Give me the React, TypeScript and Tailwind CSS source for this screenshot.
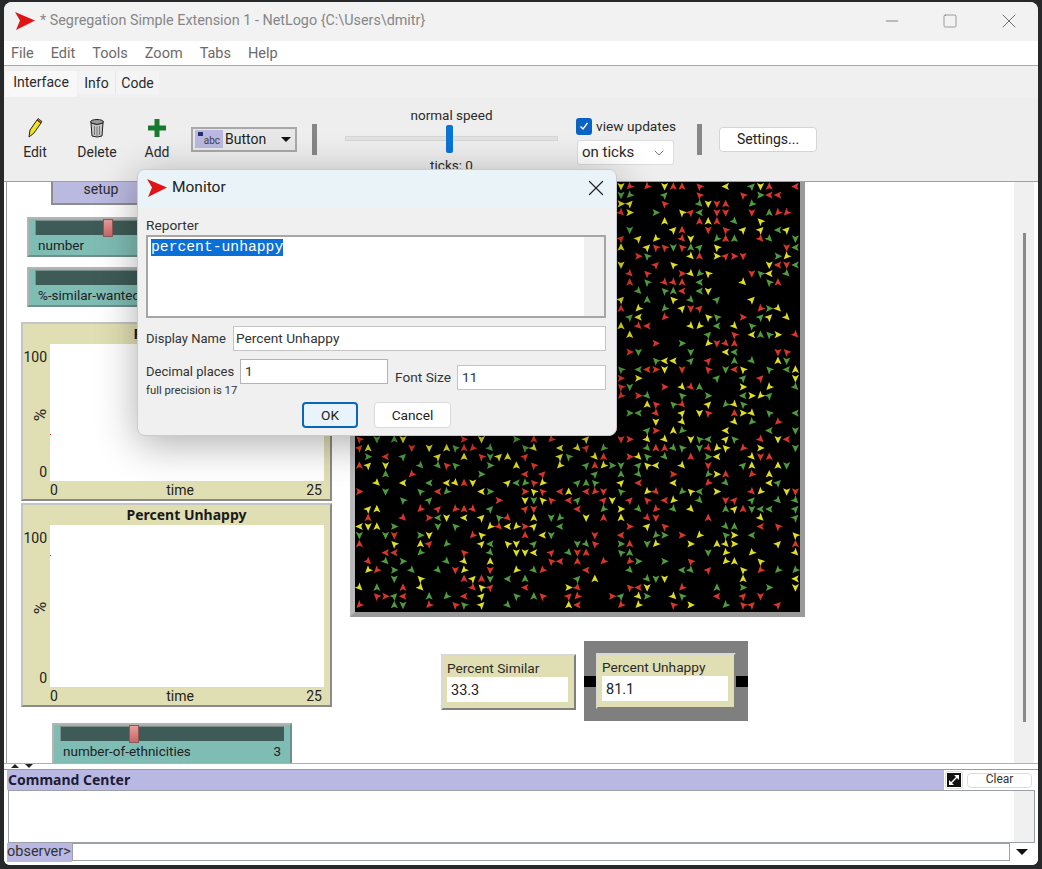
import { ChevronDown, Minus, Square, X } from 'lucide-react'

// seeded so the turtles stay put between runs
function makeTurtles() {
	let s = 20240611
	const rnd = () => {
		s = (s + 0x6d2b79f5) | 0
		let t = Math.imul(s ^ (s >>> 15), 1 | s)
		t = (t + Math.imul(t ^ (t >>> 7), 61 | t)) ^ t
		return ((t ^ (t >>> 14)) >>> 0) / 4294967296
	}
	const colors = ['#d9362b', '#dede22', '#4f9c3f']
	const out: { x: number; y: number; r: number; c: string }[] = []
	for (let row = 0; row < 49; row++) {
		for (let col = 0; col < 51; col++) {
			if (rnd() < 0.42) {
				out.push({
					x: col * 8.72 + 4.4,
					y: row * 8.72 + 4.4,
					r: Math.floor(rnd() * 8) * 45,
					c: colors[Math.floor(rnd() * 3)],
				})
			}
		}
	}
	return out
}

const turtles = makeTurtles()

function Logo({ className }: { className: string }) {
	return (
		<svg className={className} viewBox="0 0 20 18">
			<polygon points="0,0 20,8.5 1,18 5,8.5" fill="#e01414" />
		</svg>
	)
}

function ToolButton({ icon, label, className }: { icon: React.ReactNode; label: string; className: string }) {
	return (
		<div className={`flex flex-col items-center ${className}`}>
			<div className="h-[24px] flex items-center justify-center">{icon}</div>
			<span className="text-[14px] leading-[20px] mt-[2px] text-[#2a2a2a]">{label}</span>
		</div>
	)
}

function Slider({ className, label, thumb, value }: { className: string; label: string; thumb: string; value?: string }) {
	return (
		<div className={`absolute bg-[#7fbcb4] border-2 border-t-[#b4b4b4] border-l-[#b4b4b4] border-r-[#6f8f8b] border-b-[#6f8f8b] ${className}`}>
			<div className="relative mx-[6px] mt-[1px] h-[15px] bg-[#3f5b57] border-t border-l border-[#7b8f8c]">
				<div className={`absolute top-[-2px] w-[10px] h-[18px] bg-linear-to-b from-[#e89c9c] to-[#c96666] border border-[#8a5a5a] ${thumb}`} />
			</div>
			<div className="flex justify-between px-[9px] text-[13.5px] leading-[20px] text-[#222]">
				<span className="whitespace-nowrap">{label}</span>
				<span>{value}</span>
			</div>
		</div>
	)
}

function Plot({ className, title, dot }: { className: string; title: string; dot: string }) {
	return (
		<div className={`absolute flex flex-col bg-[#e0dfb3] border-2 border-t-[#c4c4c4] border-l-[#c4c4c4] border-r-[#8a8a8a] border-b-[#8a8a8a] pl-[2px] pr-[6px] ${className}`}>
			<div className="h-[20px] leading-[20px] text-center text-[14px] font-bold font-['Noto_Sans',sans-serif] text-[#1a1a1a] pl-[24px]">{title}</div>
			<div className="flex-1 flex min-h-0">
				<div className="w-[25px] flex flex-col justify-between items-end pr-[3px] pt-[4px] text-[14px] leading-[18px] text-[#222]">
					<span>100</span>
					<span className="-rotate-90 mr-[1px] text-[17px]">%</span>
					<span>0</span>
				</div>
				<div className="relative flex-1 bg-white">
					<div className={`absolute left-0 w-[1px] h-[1px] ${dot}`} />
				</div>
			</div>
			<div className="h-[18px] flex justify-between pl-[25px] pr-[2px] text-[14px] leading-[18px] text-[#222]">
				<span>0</span>
				<span className="ml-[-4px]">time</span>
				<span>25</span>
			</div>
		</div>
	)
}

function Monitor({ className, label, value }: { className: string; label: string; value: string }) {
	return (
		<div className={`bg-[#e0dfb3] border-2 border-t-[#d8d8d8] border-l-[#d8d8d8] border-r-[#7f7f7f] border-b-[#7f7f7f] pl-[4px] pr-[6px] ${className}`}>
			<div className="h-[21px] leading-[24px] text-[13.7px] text-[#2a2a2a] whitespace-nowrap">{label}</div>
			<div className="h-[25px] bg-white px-[4px] leading-[27px] text-[14.5px] text-[#222]">{value}</div>
		</div>
	)
}

export default function App() {
	return (
		<div className="relative w-[1042px] h-[869px] overflow-hidden bg-[#26282a] pt-[2px] pl-[4px] pr-[4px] pb-[4px] font-['Roboto',sans-serif]">
			<div className="h-full flex flex-col rounded-t-[8px] rounded-b-[6px] overflow-hidden bg-[#f0f0f0]">
				{/* title bar */}
				<div className="h-[39px] shrink-0 flex items-center bg-[#f2f2f2] text-[#868686] pb-[2px]">
					<Logo className="w-[20px] h-[18px] ml-[11px]" />
					<span className="ml-[5px] text-[14.35px]">* Segregation Simple Extension 1 - NetLogo {'{C:\\Users\\dmitr}'}</span>
					<div className="ml-auto flex items-center text-[#6f6f6f]">
						<Minus className="w-[20px] h-[20px] mr-[40px]" strokeWidth={1} />
						<Square className="w-[16px] h-[16px] mr-[39px]" strokeWidth={1} />
						<X className="w-[24px] h-[24px] mr-[17px]" strokeWidth={1} />
					</div>
				</div>
				{/* menu */}
				<div className="h-[25px] shrink-0 flex items-center gap-[17px] bg-white border-b border-[#a8a8a8] pl-[7px] pt-[1px] text-[14.5px] text-[#6a6a6a]">
					<span>File</span>
					<span>Edit</span>
					<span>Tools</span>
					<span>Zoom</span>
					<span>Tabs</span>
					<span>Help</span>
				</div>
				{/* tabs */}
				<div className="h-[31px] shrink-0 flex items-end pl-[1px] text-[14px] text-[#2a2a2a] bg-[#f0f0f0]">
					<div className="h-[26px] w-[72px] text-center leading-[22px] bg-[#f8f8f8]">Interface</div>
					<div className="h-[23px] w-[38px] ml-[1px] text-center leading-[24px] mb-[3px] bg-[#f4f4f4] border-r border-[#e6e6e6]">Info</div>
					<div className="h-[23px] w-[43px] text-center leading-[24px] mb-[3px] bg-[#f4f4f4]">Code</div>
				</div>
				{/* toolbar */}
				<div className="h-[85px] shrink-0 flex items-center bg-[#eeeeee] border-b border-[#a0a0a0] pl-[7px]">
					<ToolButton
						className="w-[48px]"
						label="Edit"
						icon={
							<svg className="w-[16px] h-[20px]" viewBox="0 0 16 20">
								<polygon points="2,19 3,12 10,2 14,5 7,15" fill="#f2e41c" stroke="#222" strokeWidth="1" />
								<polygon points="10,2 11,0.5 15,3.5 14,5" fill="#e8641e" stroke="#222" strokeWidth="0.8" />
							</svg>
						}
					/>
					<ToolButton
						className="w-[60px] ml-[8px]"
						label="Delete"
						icon={
							<svg className="w-[16px] h-[20px]" viewBox="0 0 16 20">
								<ellipse cx="8" cy="4" rx="6.5" ry="2.5" fill="#9a9a9a" stroke="#222" strokeWidth="1" />
								<path d="M2 5 L3 18 Q8 20 13 18 L14 5 Q8 8 2 5Z" fill="#c4c4c4" stroke="#222" strokeWidth="1" />
								<path d="M5.5 8 V17 M8 8.5 V18 M10.5 8 V17" stroke="#777" strokeWidth="1" />
							</svg>
						}
					/>
					<ToolButton
						className="w-[44px] ml-[8px]"
						label="Add"
						icon={
							<svg className="w-[18px] h-[18px]" viewBox="0 0 18 18">
								<path d="M6.5 0 H11.5 V6.5 H18 V11.5 H11.5 V18 H6.5 V11.5 H0 V6.5 H6.5Z" fill="#187a2f" />
							</svg>
						}
					/>
					<div className="w-[106px] h-[25px] ml-[12px] flex items-center border-2 border-[#a8a8a8] bg-[#e8e8e8] pl-[2px] text-[14px] text-[#222]">
						<div className="relative w-[28px] h-[18px] bg-[#b9b8e2] text-[10px] leading-[22px] text-right pr-[3px] text-[#444]">
							abc
							<span className="absolute left-[3px] top-[2px] w-[5px] h-[4px] bg-[#223066]" />
						</div>
						<span className="ml-[2px]">Button</span>
						<span className="ml-auto mr-[4px] w-0 h-0 border-x-[5px] border-x-transparent border-t-[5px] border-t-[#111]" />
					</div>
					<div className="w-[5px] h-[31px] ml-[15px] bg-[#868686]" />
					<div className="relative w-[213px] h-[70px] ml-[28px] flex flex-col items-center justify-between text-[13.5px] text-[#2a2a2a] mt-[1px]">
						<span className="leading-[20px]">normal speed</span>
						<span className="absolute left-0 right-0 top-[31px] h-[5px] bg-[#e2e2e2] border border-[#d6d6d6]" />
						<span className="absolute left-[101px] top-[20px] w-[7px] h-[28px] rounded-[2px] bg-[#0a74d6]" />
						<span className="leading-[20px]">ticks: 0</span>
					</div>
					<div className="w-[98px] ml-[18px] flex flex-col items-start text-[13.7px] text-[#2a2a2a] mt-[2px]">
						<div className="flex items-center h-[22px]">
							<span className="w-[16px] h-[17px] rounded-[3px] bg-[#0a62c2] flex items-center justify-center">
								<svg className="w-[10px] h-[10px]" viewBox="0 0 10 10" fill="none" stroke="#fff" strokeWidth="1.3">
									<path d="M1.5 5.5 L4 8 L8.5 2" />
								</svg>
							</span>
							<span className="ml-[4px] whitespace-nowrap">view updates</span>
						</div>
						<div className="w-[97px] h-[25px] mt-[3px] ml-[1px] flex items-center justify-between rounded-[3px] bg-white border border-[#dcdcdc] pl-[4px] pr-[6px] text-[15px]">
							<span>on ticks</span>
							<ChevronDown className="w-[16px] h-[16px] text-[#555]" strokeWidth={1.2} />
						</div>
					</div>
					<div className="w-[5px] h-[31px] ml-[23px] bg-[#868686]" />
					<div className="w-[98px] h-[25px] ml-[17px] rounded-[4px] bg-white border border-[#d4d4d4] text-center leading-[23px] text-[14px] text-[#222]">Settings...</div>
				</div>
				{/* interface canvas */}
				<div className="flex-1 min-h-0 flex bg-white">
					<div className="relative flex-1 ml-[2px] border-l border-[#9a9a9a] bg-white overflow-hidden">
						<div className="absolute left-[44px] top-0 w-[98px] h-[23px] bg-[#bab9e0] border-l-2 border-b-2 border-l-[#8d8d8d] border-b-[#8d8d8d] text-center text-[14px] leading-[15px] text-[#2a2a2a]">setup</div>
						<Slider className="left-[20px] top-[35px] w-[239px] h-[40px]" label="number" thumb="left-[67px]" />
						<Slider className="left-[20px] top-[85px] w-[239px] h-[40px]" label="%-similar-wanted" thumb="left-[170px]" />
						<Plot className="left-[14px] top-[140px] w-[311px] h-[179px]" title="Percent Similar" dot="top-[90px] bg-[#e02020]" />
						<Plot className="left-[14px] top-[321px] w-[311px] h-[204px]" title="Percent Unhappy" dot="top-[30px] bg-[#3a9a3a]" />
						<Slider className="left-[45px] top-[541px] w-[240px] h-[42px]" label="number-of-ethnicities" thumb="left-[68px]" value="3" />
						{/* world view */}
						<div className="absolute left-[343px] top-0 w-[455px] h-[435px] border-[5px] border-t-0 border-l-[#b8b8b8] border-r-[#9a9a9a] border-b-[#9a9a9a] bg-black">
							<svg className="w-full h-full" viewBox="0 0 445 430">
								{turtles.map((t, i) => (
									<polygon
										key={i}
										points="0,-4.2 3.6,3.4 0,1.8 -3.6,3.4"
										fill={t.c}
										transform={`translate(${t.x} ${t.y}) rotate(${t.r})`}
									/>
								))}
							</svg>
						</div>
						<Monitor className="absolute left-[434px] top-[472px] w-[135px] h-[56px]" label="Percent Similar" value="33.3" />
						{/* selected monitor with handles */}
						<div className="absolute left-[577px] top-[459px] w-[164px] h-[80px] bg-[#7f7f7f] flex items-center justify-between">
							<span className="w-[12px] h-[11px] bg-black" />
							<Monitor className="w-[140px] h-[56px]" label="Percent Unhappy" value="81.1" />
							<span className="w-[12px] h-[11px] bg-black" />
						</div>
					</div>
					<div className="w-[20px] mr-[4px] bg-[#f0f0f0] relative">
						<span className="absolute left-[9px] top-[51px] w-[3px] h-[489px] bg-[#8a8a8a]" />
					</div>
				</div>
				{/* splitter */}
				<div className="relative h-[7px] shrink-0 bg-white border-t border-[#b0b0b0] border-b border-b-[#9a9a9a]">
					<span className="absolute left-[7px] top-[0px] w-0 h-0 border-x-[4px] border-x-transparent border-b-[4px] border-b-[#222]" />
					<span className="absolute left-[21px] top-[0px] w-0 h-0 border-x-[4px] border-x-transparent border-t-[4px] border-t-[#222]" />
				</div>
				{/* command center */}
				<div className="h-[20px] shrink-0 flex items-center bg-white pl-[3px] pr-[2px]">
					<div className="flex-1 h-full bg-[#b9b8e2] pl-[1px] text-[14px] leading-[20px] font-bold font-['Noto_Sans',sans-serif] text-[#1c1c3a]">Command Center</div>
					<div className="w-[18px] h-[18px] ml-[1px] rounded-[3px] bg-white border border-[#dcdcdc] flex items-center justify-center">
						<svg className="w-[14px] h-[14px]" viewBox="0 0 14 14">
							<rect width="14" height="14" fill="#111" />
							<path d="M2 12 V7 L4 9 L9 4 L7 2 H12 V7 L10 5 L5 10 L7 12Z" fill="#fff" />
						</svg>
					</div>
					<div className="w-[65px] h-[15px] ml-[4px] mr-[4px] rounded-[4px] bg-white border border-[#dcdcdc] text-center text-[12px] leading-[10px] text-[#333]">Clear</div>
				</div>
				<div className="h-[53px] shrink-0 flex bg-white pl-[4px] pr-[3px]">
					<div className="flex-1 flex border border-[#9aa0a6]">
						<div className="flex-1" />
						<div className="w-[20px] bg-[#f0f0f0]" />
					</div>
				</div>
				<div className="h-[22px] shrink-0 pb-[3px] flex items-start pl-[3px] pr-[4px] bg-white">
					<div className="w-[65px] h-[19px] bg-[#b9b8e2] text-[14.5px] leading-[18px] text-[#333] overflow-hidden whitespace-nowrap">observer&gt;</div>
					<div className="flex-1 h-[18px] bg-white border border-[#9aa0a6]" />
					<div className="w-[24px] h-[18px] flex items-center justify-center">
						<span className="w-0 h-0 border-x-[6px] border-x-transparent border-t-[6px] border-t-[#111]" />
					</div>
				</div>
			</div>

			{/* Monitor dialog */}
			<div className="absolute left-[137px] top-[169px] w-[480px] h-[267px] rounded-[8px] overflow-hidden bg-[#f0f0f0] border border-[#c8ccd0] shadow-[0_8px_40px_rgba(0,0,0,0.32)] text-[13.7px] text-[#333]">
				<div className="h-[38px] flex items-center bg-[#eaf3f8] pb-[2px]">
					<Logo className="w-[20px] h-[18px] ml-[9px]" />
					<span className="ml-[5px] text-[15.5px] text-[#222]">Monitor</span>
					<X className="w-[26px] h-[26px] ml-auto mr-[7px] text-[#222]" strokeWidth={1.1} />
				</div>
				<div className="pl-[8px] pr-[10px] pt-[8px]">
					<div className="leading-[19px]">Reporter</div>
					<div className="h-[83px] flex border-2 border-[#a6a6a6] bg-white">
						<div className="flex-1 pl-[3px] pt-[2px]">
							<span className="bg-[#0a6fd6] text-white font-['Liberation_Mono',monospace] text-[14.7px] leading-[17px] block w-fit">percent-unhappy</span>
						</div>
						<div className="w-[20px] bg-[#f0f0f0]" />
					</div>
					<div className="flex items-center mt-[8px] h-[25px]">
						<span className="w-[87px] whitespace-nowrap text-[13px]">Display Name</span>
						<div className="flex-1 h-full bg-white border border-[#c4c4c4] pl-[2px] leading-[23px]">Percent Unhappy</div>
					</div>
					<div className="flex mt-[8px]">
						<div className="w-[94px]">
							<div className="h-[25px] leading-[25px] whitespace-nowrap text-[13px]">Decimal places</div>
							<div className="text-[11.3px] leading-[13px] whitespace-nowrap">full precision is 17</div>
						</div>
						<div className="w-[148px] h-[25px] bg-white border border-[#b4b4b4] pl-[4px] leading-[23px]">1</div>
						<div className="flex items-center mt-[6px] h-[25px] ml-[7px] flex-1">
							<span className="w-[62px] whitespace-nowrap">Font Size</span>
							<div className="flex-1 h-full bg-white border border-[#c4c4c4] pl-[4px] leading-[23px]">11</div>
						</div>
					</div>
					<div className="flex gap-[16px] mt-[5px] pl-[156px]">
						<div className="w-[56px] h-[26px] rounded-[4px] bg-[#e9f3fb] border-2 border-[#0a67b8] text-center leading-[22px] text-[#222]">OK</div>
						<div className="w-[77px] h-[26px] rounded-[4px] bg-white border border-[#dadada] text-center leading-[24px] text-[#222]">Cancel</div>
					</div>
				</div>
			</div>
		</div>
	)
}
